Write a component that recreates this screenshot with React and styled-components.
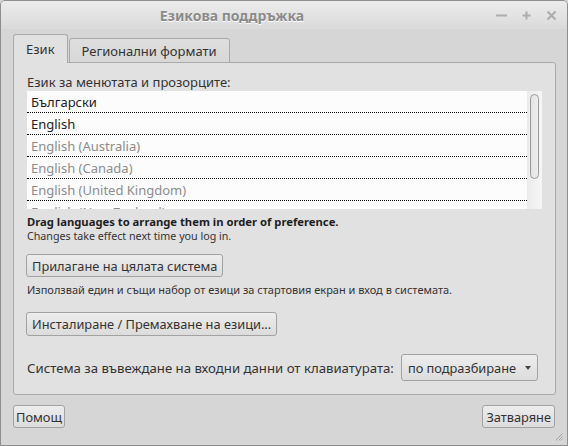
import styled, { createGlobalStyle } from 'styled-components';

const GlobalStyle = createGlobalStyle`
    html, body {
        margin: 0;
        padding: 0;
        background: #d6d6d6;
    }
    * {
        box-sizing: border-box;
    }
`;

const Window = styled.div`
    width: 568px;
    height: 446px;
    display: flex;
    flex-direction: column;
    border: 1px solid #8e8e8e;
    border-radius: 5px 5px 0 0;
    background: #d6d6d6;
    font-family: "Noto Sans", "Open Sans", sans-serif;
    color: #333333;
    position: relative;
    overflow: hidden;
`;

const TitleBar = styled.div`
    height: 28px;
    display: flex;
    align-items: center;
    background: linear-gradient(#ececec, #dadada);
`;

const Title = styled.div`
    flex: 1;
    text-align: center;
    padding-left: 4px;
    font-size: 14px;
    font-weight: bold;
    color: #8a8a8a;
    text-shadow: 0 1px 0 #ffffff;
`;

const WinButtons = styled.div`
    display: flex;
    align-items: center;
    gap: 14px;
    padding-right: 10px;
    width: 108px;
    justify-content: flex-end;
`;

const WinButton = styled.svg`
    width: 11px;
    height: 11px;
    stroke: #acacac;
    stroke-width: 2;
    fill: none;
`;

const Body = styled.div`
    flex: 1;
    display: flex;
    flex-direction: column;
    padding: 6px 12px 0 12px;
`;

const TabRow = styled.div`
    display: flex;
    align-items: flex-end;
    height: 28px;
    gap: 1px;
    position: relative;
    z-index: 1;
`;

const Tab = styled.div`
    height: ${({ $active }) => ($active ? '29px' : '25px')};
    padding: 0 12px;
    display: flex;
    align-items: center;
    font-size: 13px;
    color: #333333;
    border: 1px solid #a9a9a9;
    border-bottom: ${({ $active }) => ($active ? 'none' : '1px solid #a9a9a9')};
    border-radius: 3px 3px 0 0;
    background: ${({ $active }) => ($active ? '#e1e1e1' : 'linear-gradient(#dedede, #d8d8d8)')};
    padding-bottom: ${({ $active }) => ($active ? '1px' : '0')};
`;

const Panel = styled.div`
    height: 333px;
    width: 543px;
    margin-top: -1px;
    border: 1px solid #a9a9a9;
    border-radius: 0 3px 3px 3px;
    background: #e1e1e1;
    padding: 11px 13px 0 13px;
    display: flex;
    flex-direction: column;
`;

const Label = styled.div`
    font-size: 13px;
    line-height: 16px;
    color: #333333;
`;

const ListBox = styled.div`
    margin-top: 1px;
    height: 118px;
    display: flex;
    background: #fcfcfc;
    overflow: hidden;
`;

const Rows = styled.div`
    flex: 1;
`;

const Row = styled.div`
    height: 22px;
    padding-left: 4px;
    display: flex;
    align-items: center;
    font-size: 13px;
    color: ${({ $dim }) => ($dim ? '#8c8c8c' : '#222222')};
    border-bottom: 1px dotted #000000;
`;

const Trough = styled.div`
    width: 15px;
    background: linear-gradient(90deg, #ebebeb, #f6f6f6);
    padding: 3px 3px 0 3px;
`;

const Thumb = styled.div`
    width: 9px;
    height: 85px;
    border: 1px solid #9a9a9a;
    border-radius: 5px;
    background: linear-gradient(90deg, #e4e4e4, #eeeeee);
`;

const Hint = styled.div`
    margin-top: ${({ $gap }) => $gap || 0}px;
    font-size: ${({ $size }) => $size || 11}px;
    line-height: 15px;
    font-weight: ${({ $bold }) => ($bold ? 'bold' : 'normal')};
    color: ${({ $bold }) => ($bold ? '#1e1e1e' : '#333333')};
    white-space: nowrap;
`;

const Button = styled.button`
    align-self: flex-start;
    margin-top: ${({ $gap }) => $gap || 0}px;
    margin-left: ${({ $shift }) => $shift || 0}px;
    height: ${({ $h }) => $h || 23}px;
    padding: 0 ${({ $pad }) => $pad || 5}px;
    font-family: inherit;
    font-size: 12.8px;
    color: #333333;
    border: 1px solid #a2a2a2;
    border-radius: 3px;
    background: linear-gradient(#ededed, #dcdcdc);
    cursor: pointer;
    display: flex;
    align-items: center;
    gap: 9px;
    white-space: nowrap;
`;

const KeyboardRow = styled.div`
    margin-top: 18px;
    display: flex;
    align-items: center;
    gap: 7px;
    font-size: 13.2px;
    white-space: nowrap;
`;

const Caret = styled.span`
    width: 0;
    height: 0;
    border-left: 3.5px solid transparent;
    border-right: 3.5px solid transparent;
    border-top: 4px solid #444444;
`;

const Footer = styled.div`
    display: flex;
    justify-content: space-between;
    margin-top: 10px;
`;

const Grip = styled.svg`
    position: absolute;
    right: 4px;
    bottom: 4px;
    width: 8px;
    height: 8px;
    stroke: #a4a4a4;
    stroke-width: 1;
`;

const languages = [
    { name: 'Български', dim: false },
    { name: 'English', dim: false },
    { name: 'English (Australia)', dim: true },
    { name: 'English (Canada)', dim: true },
    { name: 'English (United Kingdom)', dim: true },
    { name: 'English (New Zealand)', dim: true },
];

function App() {
    return (
        <Window>
            <GlobalStyle />
            <TitleBar>
                <Title>Езикова поддръжка</Title>
                <WinButtons>
                    <WinButton viewBox="0 0 11 11"><path d="M0 5.5h11" /></WinButton>
                    <WinButton viewBox="0 0 11 11"><path d="M1.5 5.5h8M5.5 1.5v8" /></WinButton>
                    <WinButton viewBox="0 0 11 11"><path d="M1.5 1.5l8 8M9.5 1.5l-8 8" /></WinButton>
                </WinButtons>
            </TitleBar>
            <Body>
                <TabRow>
                    <Tab $active>Език</Tab>
                    <Tab>Регионални формати</Tab>
                </TabRow>
                <Panel>
                    <Label>Език за менютата и прозорците:</Label>
                    <ListBox>
                        <Rows>
                            {languages.map((lang) => (
                                <Row key={lang.name} $dim={lang.dim}>{lang.name}</Row>
                            ))}
                        </Rows>
                        <Trough>
                            <Thumb />
                        </Trough>
                    </ListBox>
                    <Hint $bold $gap={5} $size={11.25}>Drag languages to arrange them in order of preference.</Hint>
                    <Hint $size={10.7}>Changes take effect next time you log in.</Hint>
                    <Button $gap={10} $shift={-1}>Прилагане на цялата система</Button>
                    <Hint $gap={5}>Използвай един и същи набор от езици за стартовия екран и вход в системата.</Hint>
                    <Button $gap={15} $shift={-1} $h={24}>Инсталиране / Премахване на езици...</Button>
                    <KeyboardRow>
                        Система за въвеждане на входни данни от клавиатурата:
                        <Button $h={27} $pad={6}>
                            по подразбиране
                            <Caret />
                        </Button>
                    </KeyboardRow>
                </Panel>
                <Footer>
                    <Button $pad={2}>Помощ</Button>
                    <Button $pad={3}>Затваряне</Button>
                </Footer>
            </Body>
            <Grip viewBox="0 0 8 8">
                <path d="M7.5 0.5L0.5 7.5M7.5 3.5L3.5 7.5M7.5 6L6 7.5" />
            </Grip>
        </Window>
    );
}

export default App;
